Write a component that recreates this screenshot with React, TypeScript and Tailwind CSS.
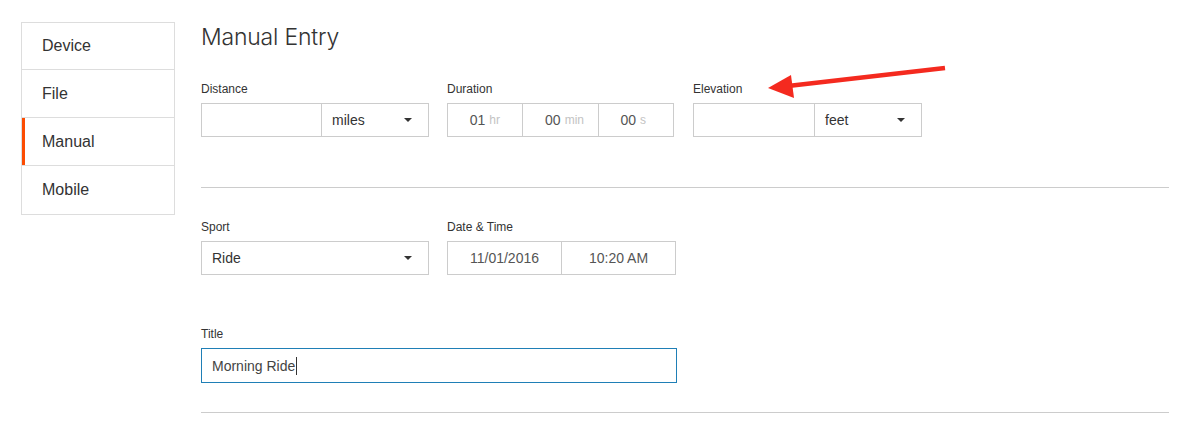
import type React from 'react';

const labelCls = 'block h-4 mb-[6px] text-[12px] leading-4 text-[#333]';

const Caret: React.FC = () => (
  <svg width="8" height="4" viewBox="0 0 8 4" className="shrink-0">
    <path d="M0 0h8L4 4z" fill="#333" />
  </svg>
);

const SelectBox: React.FC<{ value: string; className?: string }> = ({ value, className = '' }) => (
  <div className={`flex items-center justify-between h-full pl-[10px] pr-[16px] text-[14px] text-[#333] ${className}`}>
    <span>{value}</span>
    <Caret />
  </div>
);

const TimePart: React.FC<{ value: string; unit: string; className?: string }> = ({ value, unit, className = '' }) => (
  <div className={`flex-1 flex items-center h-full ${className}`}>
    <span className="flex-1 text-right text-[14px] text-[#555]">{value}</span>
    <span className="w-[37px] pl-[4px] text-[12px] text-[#c3c3c3]">{unit}</span>
  </div>
);

const sideItems = ['Device', 'File', 'Manual', 'Mobile'];

export default function App() {
  return (
    <div className="relative w-[1183px] h-[426px] bg-white overflow-hidden font-['Liberation_Sans',Arial,sans-serif]">
      <div className="flex pt-[22px] pl-[21px]">
        <nav className="w-[154px] shrink-0 self-start border border-[#ddd] divide-y divide-[#ddd]">
          {sideItems.map((item) => (
            <div
              key={item}
              className={`h-[48px] first:h-[47px] flex items-center pl-[20px] text-[16px] text-[#333] ${
                item === 'Manual' ? 'shadow-[inset_3px_0_0_#fc4c02]' : ''
              }`}
            >
              {item}
            </div>
          ))}
        </nav>

        <main className="ml-[26px] w-[968px]">
          <h1 className="h-[30px] leading-[30px] text-[23px] font-light text-[#333] font-['Inter',sans-serif] tracking-[-0.2px]">
            Manual Entry
          </h1>

          <div className="mt-[29px] flex">
            <div className="w-[228px]">
              <label className={labelCls}>Distance</label>
              <div className="flex h-[34px] border border-[#ccc]">
                <div className="w-[120px] border-r border-[#ccc]" />
                <SelectBox value="miles" className="flex-1" />
              </div>
            </div>
            <div className="w-[227px] ml-[18px]">
              <label className={labelCls}>Duration</label>
              <div className="flex h-[34px] border border-[#ccc]">
                <TimePart value="01" unit="hr" className="border-r border-[#ccc]" />
                <TimePart value="00" unit="min" className="border-r border-[#ccc]" />
                <TimePart value="00" unit="s" />
              </div>
            </div>
            <div className="w-[229px] ml-[19px]">
              <label className={labelCls}>Elevation</label>
              <div className="flex h-[34px] border border-[#ccc]">
                <div className="w-[121px] border-r border-[#ccc]" />
                <SelectBox value="feet" className="flex-1" />
              </div>
            </div>
          </div>

          <div className="mt-[50px] border-t border-[#ccc]" />

          <div className="mt-[31px] flex">
            <div className="w-[228px]">
              <label className={labelCls}>Sport</label>
              <div className="h-[34px] border border-[#ccc]">
                <SelectBox value="Ride" />
              </div>
            </div>
            <div className="w-[229px] ml-[18px]">
              <label className={labelCls}>Date &amp; Time</label>
              <div className="flex h-[34px] border border-[#ccc] text-[14px] text-[#555]">
                <div className="w-[114px] flex items-center justify-center border-r border-[#ccc]">11/01/2016</div>
                <div className="flex-1 flex items-center justify-center">10:20 AM</div>
              </div>
            </div>
          </div>

          <div className="mt-[51px] w-[476px]">
            <label className={labelCls}>Title</label>
            <div className="h-[35px] flex items-center pl-[10px] border border-[#1f7fb6] text-[14px] text-[#444]">
              <span className="border-r border-[#333] pr-px leading-[18px]">Morning Ride</span>
            </div>
          </div>

          <div className="mt-[29px] border-t border-[#ccc]" />
        </main>
      </div>

      <svg className="absolute left-[760px] top-[60px]" width="200" height="45" viewBox="0 0 200 45">
        <line x1="185" y1="8" x2="28" y2="26" stroke="#f42a1f" strokeWidth="4.5" />
        <polygon points="8,28 31,15 34,38" fill="#f42a1f" />
      </svg>
    </div>
  );
}
